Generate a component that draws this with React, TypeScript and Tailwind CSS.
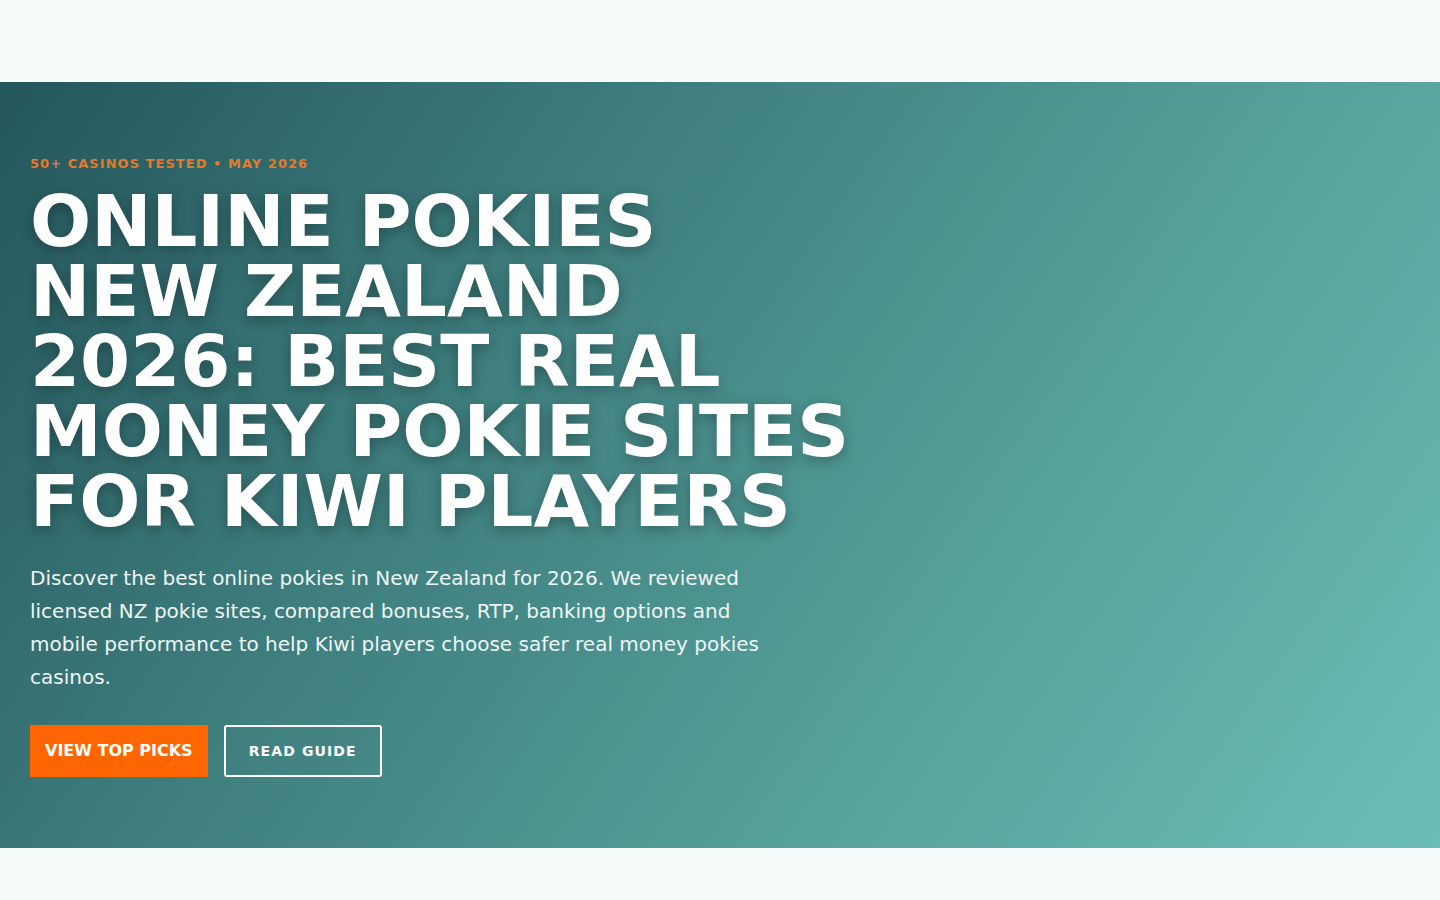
export default function App() {
  return (
    <div className="min-h-screen bg-[#f6fbfc] font-['DejaVu_Sans',sans-serif]">
      <header className="h-[82px] bg-[#f6fbfc]" />
      <section className="h-[766px] bg-[linear-gradient(125deg,#24565c_0%,#3f7f7f_35%,#549f9a_65%,#6bbeb7_100%)] px-[30px] pt-[72px]">
        <p className="text-[13px] font-bold uppercase leading-[20px] tracking-[0.08em] text-[#e8782c]">
          50+ Casinos Tested • May 2026
        </p>
        <h1 className="mt-[12px] max-w-[828px] text-[72px] font-bold uppercase leading-[70px] text-white [text-shadow:0_4px_14px_rgba(0,0,0,0.3)]">
          Online Pokies New Zealand 2026: Best Real Money Pokie Sites for Kiwi Players
        </h1>
        <p className="mt-[26px] max-w-[770px] text-[20px] leading-[33px] text-[#eef6f6]">
          Discover the best online pokies in New Zealand for 2026. We reviewed licensed NZ pokie sites, compared
          bonuses, RTP, banking options and mobile performance to help Kiwi players choose safer real money pokies
          casinos.
        </p>
        <div className="mt-[31px] flex items-center gap-[16px]">
          <a className="flex h-[52px] items-center bg-[#ff6600] px-[15px] text-[16px] font-bold uppercase text-white">
            View Top Picks
          </a>
          <a className="flex h-[52px] items-center rounded-[3px] border-2 border-white px-[23px] text-[14px] font-bold uppercase tracking-[0.08em] text-white">
            Read Guide
          </a>
        </div>
      </section>
      <div className="h-[52px]" />
    </div>
  );
}
